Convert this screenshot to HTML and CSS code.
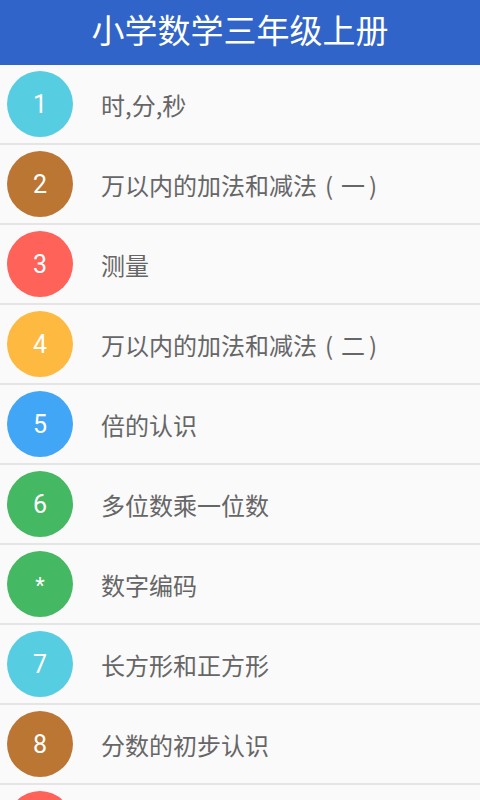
FILE: index.html
```html
<!DOCTYPE html>
<html lang="zh">
  <head>
    <meta charset="UTF-8" />
    <meta name="viewport" content="width=device-width, initial-scale=1.0" />
    <title>小学数学三年级上册</title>
    <link rel="stylesheet" href="styles.css">
  </head>
  <body>
    <div id="header">小学数学三年级上册</div>
    <ul id="list">
      <li class="row"><span class="num cyan">1</span><span class="title">时,分,秒</span></li>
      <li class="row"><span class="num brown">2</span><span class="title">万以内的加法和减法<span class="pl">(</span>一<span class="pr">)</span></span></li>
      <li class="row"><span class="num red">3</span><span class="title">测量</span></li>
      <li class="row"><span class="num amber">4</span><span class="title">万以内的加法和减法<span class="pl">(</span>二<span class="pr">)</span></span></li>
      <li class="row"><span class="num blue">5</span><span class="title">倍的认识</span></li>
      <li class="row"><span class="num green">6</span><span class="title">多位数乘一位数</span></li>
      <li class="row"><span class="num green star">*</span><span class="title">数字编码</span></li>
      <li class="row"><span class="num cyan">7</span><span class="title">长方形和正方形</span></li>
      <li class="row"><span class="num brown">8</span><span class="title">分数的初步认识</span></li>
      <li class="row"><span class="num red"></span></li>
    </ul>
  </body>
</html>
```

FILE: styles.css
```css
body {
  margin: 0;
  padding: 0;
  background-color: #fafafa;
  font-family: Roboto, "Noto Sans CJK SC", sans-serif;
  overflow: hidden;
}

#header {
  height: 65px;
  line-height: 63px;
  background-color: #3164c9;
  color: #fff;
  text-align: center;
  font-size: 33px;
}

#list {
  list-style: none;
  margin: 0;
  padding: 0;
}

.row {
  display: flex;
  align-items: center;
  height: 78px;
  border-bottom: 2px solid #e5e5e5;
}

.num {
  width: 66px;
  height: 66px;
  margin-left: 7px;
  border-radius: 50%;
  display: flex;
  align-items: center;
  justify-content: center;
  color: #fff;
  font-size: 25px;
  flex-shrink: 0;
}

.star {
  font-size: 22px;
  padding-top: 2px;
  box-sizing: border-box;
}

.cyan { background-color: #56cde0; }
.brown { background-color: #bb7634; }
.red { background-color: #fe6258; }
.amber { background-color: #feb941; }
.blue { background-color: #42a6f6; }
.green { background-color: #45b863; }

.title {
  margin-left: 28px;
  font-size: 24px;
  color: #666;
  font-family: "Noto Sans CJK SC", sans-serif;
}

/* parentheses sit in full-width cells, like the phone's font */
.pl,
.pr {
  display: inline-block;
  width: 24px;
}

.pl {
  text-align: center;
}

.pr {
  padding-left: 4px;
  box-sizing: border-box;
}
```
